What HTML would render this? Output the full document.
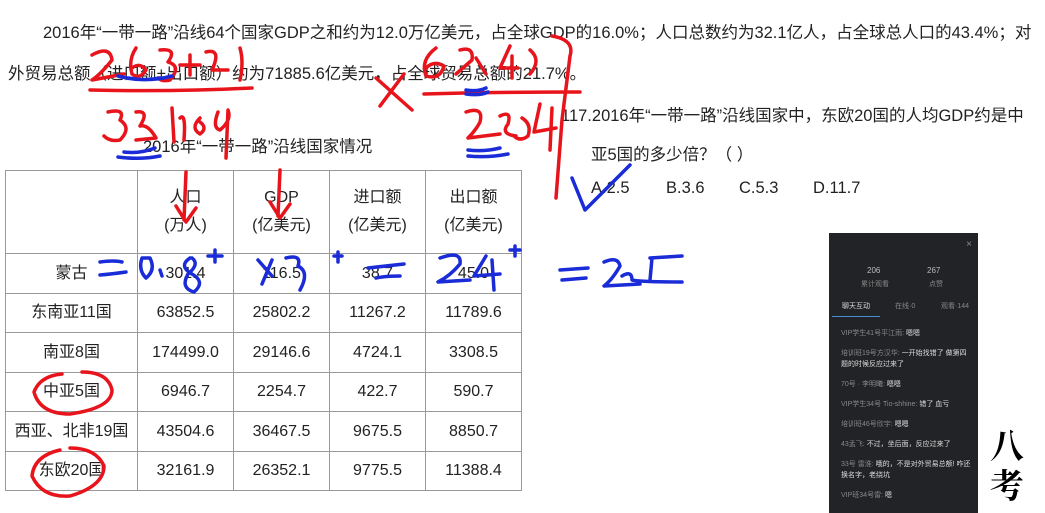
<!DOCTYPE html>
<html><head><meta charset="utf-8"><style>
html,body{margin:0;width:1045px;height:513px;overflow:hidden;}
body{background:#fff;position:relative;font-family:"Liberation Sans","Noto Sans CJK SC",sans-serif;color:#222;}
.t{position:absolute;font-size:16.5px;white-space:nowrap;}
table{position:absolute;left:5px;top:170px;border-collapse:collapse;font-size:16px;}
td{border:1px solid #999;text-align:center;padding:0;line-height:20px;vertical-align:middle;}
.panel{position:absolute;left:829px;top:233px;width:149px;height:280px;background:#222326;color:#888;font-size:7px;overflow:hidden;}
.panel .w{color:#ddd}
.chat div{margin-bottom:9px}
</style></head><body>
<div class="t" style="left:43px;top:19px">2016年“一带一路”沿线64个国家GDP之和约为12.0万亿美元，占全球GDP的16.0%；人口总数约为32.1亿人，占全球总人口的43.4%；对</div>
<div class="t" style="left:8px;top:60px">外贸易总额（进口额+出口额）约为71885.6亿美元，占全球贸易总额的21.7%。</div>
<div class="t" style="left:143px;top:133px">2016年“一带一路”沿线国家情况</div>
<div class="t" style="left:561px;top:102px">117.2016年“一带一路”沿线国家中，东欧20国的人均GDP约是中</div>
<div class="t" style="left:591px;top:141px">亚5国的多少倍？（ ）</div>
<div class="t" style="left:591px;top:179px">A.2.5</div>
<div class="t" style="left:666px;top:179px">B.3.6</div>
<div class="t" style="left:739px;top:179px">C.5.3</div>
<div class="t" style="left:813px;top:179px">D.11.7</div>
<table>
<tr style="height:83px"><td style="width:131px"></td><td style="width:95px;line-height:28px">人口<br>(万人)</td><td style="width:95px;line-height:28px">GDP<br>(亿美元)</td><td style="width:95px;line-height:28px">进口额<br>(亿美元)</td><td style="width:95px;line-height:28px">出口额<br>(亿美元)</td></tr>
<tr style="height:40px"><td>蒙古</td><td>301.4</td><td>116.5</td><td>38.7</td><td>45.0</td></tr>
<tr style="height:39px"><td>东南亚11国</td><td>63852.5</td><td>25802.2</td><td>11267.2</td><td>11789.6</td></tr>
<tr style="height:40px"><td>南亚8国</td><td>174499.0</td><td>29146.6</td><td>4724.1</td><td>3308.5</td></tr>
<tr style="height:39px"><td>中亚5国</td><td>6946.7</td><td>2254.7</td><td>422.7</td><td>590.7</td></tr>
<tr style="height:40px"><td>西亚、北非19国</td><td>43504.6</td><td>36467.5</td><td>9675.5</td><td>8850.7</td></tr>
<tr style="height:39px"><td>东欧20国</td><td>32161.9</td><td>26352.1</td><td>9775.5</td><td>11388.4</td></tr>
</table>
<div class="panel">
<div style="position:absolute;right:6px;top:6px;font-size:10px">×</div>
<div class="w" style="position:absolute;left:38px;top:33px;font-size:8px;color:#bbb">206</div>
<div style="position:absolute;left:32px;top:46px">累计观看</div>
<div class="w" style="position:absolute;left:98px;top:33px;font-size:8px;color:#bbb">267</div>
<div style="position:absolute;left:100px;top:46px">点赞</div>
<div class="w" style="position:absolute;left:13px;top:68px">聊天互动</div>
<div style="position:absolute;left:66px;top:68px">在线·0</div>
<div style="position:absolute;left:112px;top:68px">观看·144</div>
<div style="position:absolute;left:3px;top:83px;width:48px;height:1px;background:#4a8fd6"></div>
<div class="chat" style="position:absolute;left:12px;top:95px;width:130px;height:183px;overflow:hidden;line-height:11px">
<div>VIP学生41号平江雨: <span class="w">嗯嗯</span></div>
<div>培训班19号方汉华: <span class="w">一开始找错了 做第四题的时候反应过来了</span></div>
<div>70号 · 李明曦: <span class="w">嗯嗯</span></div>
<div>VIP学生34号 Tio-shhine: <span class="w">错了 血亏</span></div>
<div>培训班46号欣宇: <span class="w">嗯嗯</span></div>
<div>43孟飞: <span class="w">不过，坐后面，反应过来了</span></div>
<div>33号 雷淮: <span class="w">哦的，不是对外贸易总额! 咋还换名字，老绕坑</span></div>
<div>VIP班34号雷: <span class="w">嗯</span></div>
<div style="color:#c9a227">62号张嘉豪: 欧欧王永恒老师，完来重叫你</div>
</div>
</div>
<div style="position:absolute;left:990px;top:424px;width:50px;height:84px;overflow:hidden;font-family:'Noto Serif CJK SC',serif;font-size:34px;line-height:40px;color:#000;font-weight:bold">八<br>考</div>
<svg width="1045" height="513" style="position:absolute;left:0;top:0" fill="none" stroke-linecap="round" stroke-linejoin="round">
<g stroke="#e8141c" stroke-width="3.5">
<path d="M92 55 Q110 45 112 60 Q100 75 92 80 L124 74"/>
<path d="M136 48 Q128 60 132 74 Q140 80 146 70 Q140 62 132 68"/>
<path d="M160 50 Q178 48 168 62 Q182 66 170 80 Q162 82 158 78"/>
<path d="M180 65 L200 65 M190 55 L190 75"/>
<path d="M206 52 Q222 48 212 70 L228 70"/>
<path d="M240 48 Q244 62 240 80"/>
<path d="M90 90 Q170 92 252 88"/>
<path d="M108 112 Q126 108 120 120 Q132 128 120 140 Q110 142 104 136"/>
<path d="M136 112 Q150 110 140 126 Q148 124 156 138 L136 140"/>
<path d="M172 108 L174 142 M180 118 Q186 112 184 140 M200 118 Q190 128 200 134 Q208 128 200 122"/>
<path d="M218 112 Q212 128 220 130 Q232 120 228 110 L226 158"/>
<path d="M436 48 Q420 60 426 76 Q440 80 444 66 Q434 60 426 68"/>
<path d="M460 50 Q474 46 472 60 L456 74 M476 58 L486 74"/>
<path d="M510 46 L500 68 L518 68 M512 56 L512 78"/>
<path d="M530 50 Q542 60 530 74"/>
<path d="M552 36 Q575 40 570 56 L562 120 L556 198"/>
<path d="M376 78 L412 110 M404 74 L380 106"/>
<path d="M424 94 Q490 92 580 92"/>
<path d="M466 112 Q484 106 480 122 Q476 130 468 138 L500 134"/>
<path d="M500 116 Q512 110 508 124 Q500 134 516 136"/>
<path d="M522 118 Q532 124 528 136 Q520 142 514 136"/>
<path d="M540 104 L534 132 L556 128 M552 108 L550 150"/>
<path d="M186 172 L184 220 M176 206 L186 222 L196 208"/>
<path d="M280 170 L278 216 M270 202 L280 218 L290 204"/>
<path d="M62 374 Q40 376 34 392 Q40 414 70 414 Q112 408 112 390 Q108 372 82 372"/>
<path d="M60 450 Q34 456 32 476 Q42 498 70 496 Q104 486 104 466 Q96 448 70 448"/>
</g>
<g stroke="#1a2bd8" stroke-width="3.5">
<path d="M118 76 Q140 82 160 78 M128 78 Q150 82 172 76"/>
<path d="M124 152 Q140 154 155 148 M118 157 Q140 160 160 156"/>
<path d="M466 94 Q480 96 488 92 M466 90 Q478 92 486 88"/>
<path d="M468 150 Q484 152 500 148 M468 156 Q488 158 508 154"/>
<path d="M572 178 L585 210 L630 165"/>
<path d="M100 262 Q114 260 122 262 M100 275 Q112 274 126 272"/>
<path d="M142 258 Q138 270 146 278 Q156 270 150 258 Z"/>
<path d="M160 270 L162 276"/>
<path d="M190 258 Q178 266 192 274 Q206 282 194 292 Q180 288 188 274 Q200 264 192 258"/>
<path d="M215 250 L215 262 M208 256 L222 256"/>
<path d="M258 260 L272 276 M272 260 L262 284"/>
<path d="M286 258 Q302 254 298 266 Q310 272 300 290"/>
<path d="M334 256 L342 256 M338 252 L338 262"/>
<path d="M368 268 Q386 266 404 264 M376 278 Q386 276 400 276"/>
<path d="M440 258 Q462 250 460 264 Q450 276 438 282 L470 280"/>
<path d="M486 256 L474 276 L500 274 M492 260 L494 290"/>
<path d="M510 250 L520 250 M515 246 L515 256"/>
<path d="M560 270 L588 268 M562 280 L586 278"/>
<path d="M604 262 Q618 256 620 266 Q612 280 604 286 L640 284"/>
<path d="M622 276 Q632 270 632 280 Q640 282 682 282 M650 258 L682 256 M652 258 L650 280"/>
</g>
</svg>
</body></html>
